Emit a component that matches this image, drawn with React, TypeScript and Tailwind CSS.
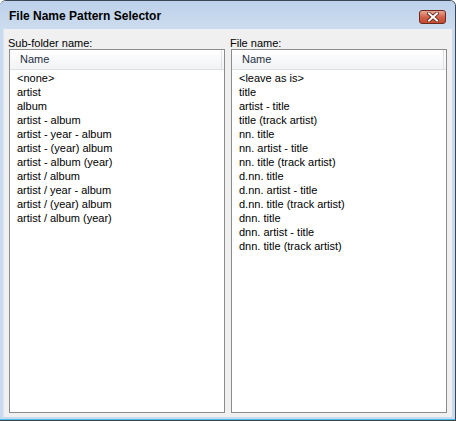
import React from "react";

const left = [
  "<none>",
  "artist",
  "album",
  "artist - album",
  "artist - year - album",
  "artist - (year) album",
  "artist - album (year)",
  "artist / album",
  "artist / year - album",
  "artist / (year) album",
  "artist / album (year)",
];

const right = [
  "<leave as is>",
  "title",
  "artist - title",
  "title (track artist)",
  "nn. title",
  "nn. artist - title",
  "nn. title (track artist)",
  "d.nn. title",
  "d.nn. artist - title",
  "d.nn. title (track artist)",
  "dnn. title",
  "dnn. artist - title",
  "dnn. title (track artist)",
];

function ListPanel({ label, items }: { label: string; items: string[] }) {
  return (
    <div className="flex flex-col w-[216px]">
      <div className="h-[12px] leading-[12px] text-[11px] text-black -ml-[1px]">{label}</div>
      <div className="h-[364px] border border-[#8c8c8c] bg-white flex flex-col">
        <div className="h-[20px] flex bg-gradient-to-b from-white to-[#f2f3f5] border-b border-[#dcdfe4]">
          <div className="w-[212px] border-r border-[#dde0e5] pl-[10px] text-[11px] leading-[19px] text-[#1e2e44]">
            Name
          </div>
        </div>
        <div className="flex flex-col pt-[1px] pl-[7px]">
          {items.map((t) => (
            <div key={t} className="h-[14px] leading-[14px] text-[11px] text-black whitespace-pre">
              {t}
            </div>
          ))}
        </div>
      </div>
    </div>
  );
}

export default function App() {
  return (
    <div
      className="w-[456px] h-[421px] flex flex-col bg-gradient-to-b from-[#c2d5eb] to-[#d6e3f2] border-t border-r border-b border-[#3c4552] rounded-t-[6px] overflow-hidden"
      style={{ fontFamily: '"Liberation Sans", Arial, sans-serif' }}
    >
      <div className="h-[28px] flex items-start justify-between pl-[9px] pr-[9px] bg-gradient-to-b from-[#bcd1ea] to-[#cddcef]">
        <div className="mt-[8px] text-[12px] leading-[14px] font-bold text-black">File Name Pattern Selector</div>
        <div className="mt-[9px] w-[27px] h-[14px] rounded-[3px] border border-[#6b2a20] bg-gradient-to-b from-[#e8a793] via-[#d2624a] to-[#c44a2f] flex items-center justify-center">
          <svg width="12" height="10" viewBox="0 0 12 10">
            <path d="M2 1.5 L10 8.5 M10 1.5 L2 8.5" stroke="#5a1f15" strokeWidth="3.6" strokeLinecap="square" />
            <path d="M2 1.5 L10 8.5 M10 1.5 L2 8.5" stroke="#ffffff" strokeWidth="2" strokeLinecap="square" />
          </svg>
        </div>
      </div>
      <div className="flex-1 flex flex-col pl-[3px] pr-[3px] pb-[2px] bg-[#c9daee]">
        <div className="flex-1 bg-[#f0f0f0] pt-[8px] pl-[5px] flex gap-[6px] border-l border-[#dbe6f3]">
          <ListPanel label="Sub-folder name:" items={left} />
          <ListPanel label="File name:" items={right} />
        </div>
      </div>
      <div className="h-[1px] bg-[#46bde8]" />
    </div>
  );
}
